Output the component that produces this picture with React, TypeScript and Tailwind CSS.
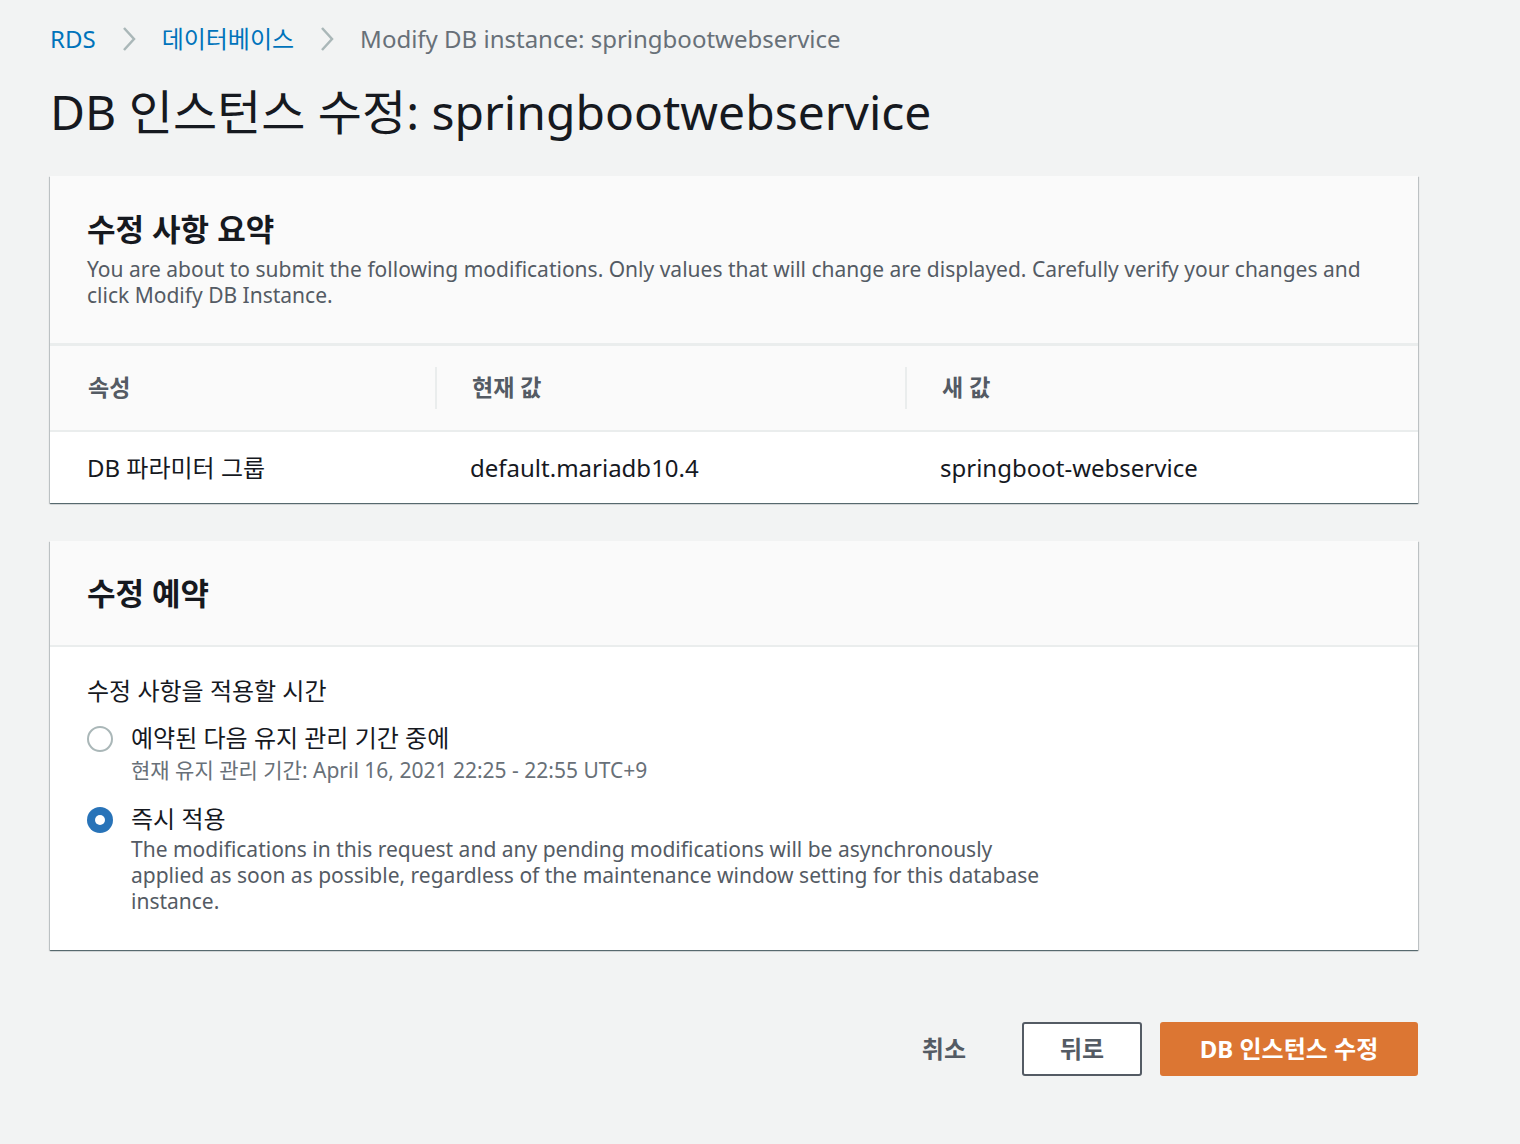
import React from "react";

const font = { fontFamily: '"Noto Sans", "Noto Sans CJK KR", sans-serif' };

function Chevron() {
  return (
    <svg width="18" height="28" viewBox="0 0 18 28" className="mx-[24px]">
      <path d="M4 3 L14 14 L4 25" fill="none" stroke="#aab7b8" strokeWidth="2.5" />
    </svg>
  );
}

const cardShadow =
  "shadow-[0_1px_1px_0_rgba(0,28,36,0.5),1px_1px_1px_0_rgba(0,28,36,0.15),-1px_1px_1px_0_rgba(0,28,36,0.15)]";

export default function App() {
  return (
    <div className="min-h-[1144px] w-[1520px] bg-[#f2f3f3] text-[#16191f]" style={font}>
      <div className="pl-[50px] pr-[102px] pt-[22px]">
        {/* Breadcrumb */}
        <div className="flex h-[34px] items-center text-[24px] leading-[34px]">
          <span className="text-[#0073bb]">RDS</span>
          <Chevron />
          <span className="text-[#0073bb]">데이터베이스</span>
          <Chevron />
          <span className="text-[#687078]">Modify DB instance: springbootwebservice</span>
        </div>
        {/* Title */}
        <h1 className="mt-[24px] text-[48px] leading-[64px] font-normal">
          DB 인스턴스 수정: springbootwebservice
        </h1>

        {/* Summary card */}
        <div className={`mt-[32px] bg-white ${cardShadow}`}>
          <div className="bg-[#fafafa] px-[37px] pt-[30px] pb-[35px] border-b-[3px] border-[#eaeded]">
            <h2 className="text-[31px] leading-[46px] font-bold">수정 사항 요약</h2>
            <p className="mt-[4px] text-[21px] leading-[26px] text-[#545b64]">
              You are about to submit the following modifications. Only values that will change are displayed. Carefully verify your changes and click Modify DB Instance.
            </p>
          </div>
          <div className="grid grid-cols-[385px_470px_1fr] bg-[#fafafa] h-[86px] items-center border-b-2 border-[#eaeded]">
            <div className="pl-[38px] pb-[2px] text-[23px] font-bold text-[#545b64]">속성</div>
            <div className="flex h-[42px] items-center border-l-2 border-[#eaeded] pl-[35px] pb-[2px] text-[23px] font-bold text-[#545b64]">현재 값</div>
            <div className="flex h-[42px] items-center border-l-2 border-[#eaeded] pl-[35px] pb-[2px] text-[23px] font-bold text-[#545b64]">새 값</div>
          </div>
          <div className="grid grid-cols-[385px_470px_1fr] h-[71px] items-center text-[24px]">
            <div className="pl-[37px]">DB 파라미터 그룹</div>
            <div className="pl-[35px]">default.mariadb10.4</div>
            <div className="pl-[35px]">springboot-webservice</div>
          </div>
        </div>

        {/* Schedule card */}
        <div className={`mt-[38px] bg-white ${cardShadow}`}>
          <div className="bg-[#fafafa] h-[106px] flex items-center px-[37px] border-b-2 border-[#eaeded]">
            <h2 className="text-[31px] leading-[46px] font-bold">수정 예약</h2>
          </div>
          <div className="px-[37px] pt-[27px] pb-[36px]">
            <div className="text-[24px] leading-[34px]">수정 사항을 적용할 시간</div>
            <div className="mt-[13px] flex gap-[18px]">
              <div className="mt-[5px] h-[26px] w-[26px] shrink-0 rounded-full border-2 border-[#aab7b8] bg-white" />
              <div>
                <div className="text-[24px] leading-[34px]">예약된 다음 유지 관리 기간 중에</div>
                <div className="text-[21px] leading-[30px] text-[#687078]">현재 유지 관리 기간: April 16, 2021 22:25 - 22:55 UTC+9</div>
              </div>
            </div>
            <div className="mt-[17px] flex gap-[18px]">
              <div className="mt-[5px] flex h-[26px] w-[26px] shrink-0 items-center justify-center rounded-full bg-[#2873b8]">
                <div className="h-[10px] w-[10px] rounded-full bg-white" />
              </div>
              <div>
                <div className="text-[24px] leading-[34px]">즉시 적용</div>
                <div className="max-w-[928px] text-[21px] leading-[26px] text-[#545b64]">
                  The modifications in this request and any pending modifications will be asynchronously applied as soon as possible, regardless of the maintenance window setting for this database instance.
                </div>
              </div>
            </div>
          </div>
        </div>

        {/* Buttons */}
        <div className="mt-[72px] flex items-center justify-end">
          <button className="mr-[56px] text-[24px] font-bold text-[#545b64]">취소</button>
          <button className="mr-[18px] h-[54px] w-[120px] rounded-[3px] border-2 border-[#545b64] bg-white text-[24px] font-bold text-[#545b64]">뒤로</button>
          <button className="h-[54px] w-[258px] rounded-[3px] bg-[#dc7633] text-[24px] font-bold text-white">DB 인스턴스 수정</button>
        </div>
      </div>
    </div>
  );
}
